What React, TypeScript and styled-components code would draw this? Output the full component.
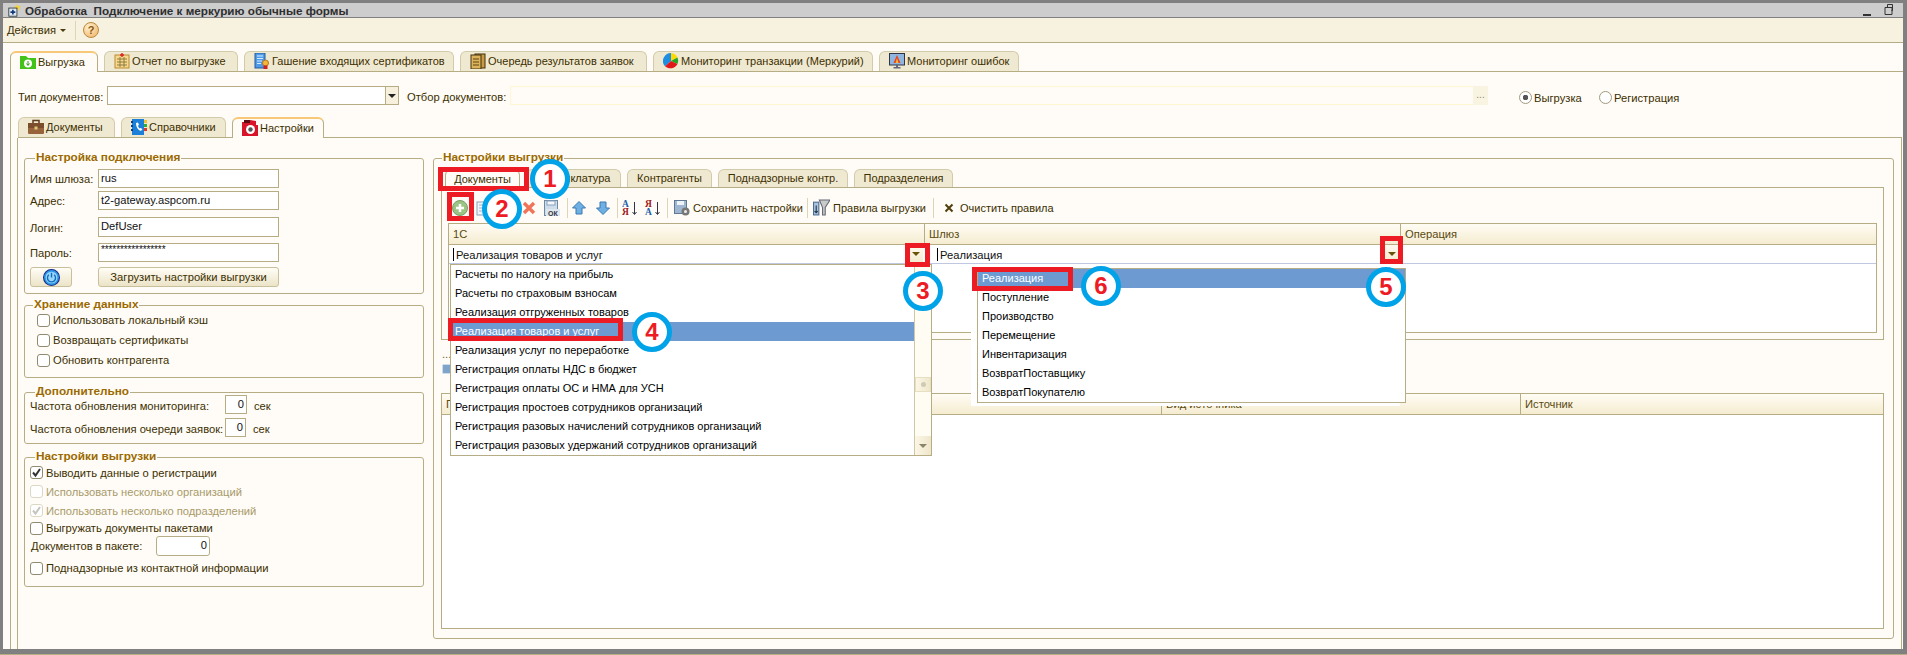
import * as React from "react"
import styled, { createGlobalStyle } from "styled-components"

const LINE = "#b6ad85"
const PAGE = "#fffcf7"
const INK = "#3c2f00"

const GlobalStyle = createGlobalStyle`
    html, body {
        margin: 0;
        padding: 0;
        overflow: hidden;
        background: ${PAGE};
    }
    * {
        box-sizing: border-box;
    }
`

const Window = styled.div`
    position: relative;
    width: 1907px;
    height: 655px;
    display: flex;
    flex-direction: column;
    padding: 3px 4px 5px 3px;
    background: #808080;
    border-bottom: 1px solid ${LINE};
    font-family: "Liberation Sans", Arial, sans-serif;
    font-size: 11.2px;
    color: ${INK};
    white-space: nowrap;
`

const TitleBar = styled.div`
    height: 15px;
    flex: none;
    display: flex;
    align-items: center;
    gap: 4px;
    padding: 0 10px 0 5px;
    background: #cdcdcd;
    border-bottom: 1px solid #808080;
    color: #2e2e2e;
    font-weight: bold;
    font-size: 11.7px;
`

const TitleText = styled.span`
    flex: 1;
    white-space: pre;
`

const MainToolbar = styled.div`
    height: 25px;
    flex: none;
    display: flex;
    align-items: center;
    padding-left: 4px;
    background: #f7f1df;
    border-bottom: 1px solid ${LINE};
`

const MenuArrow = styled.span`
    width: 0;
    height: 0;
    margin: 1px 0 0 4px;
    border-left: 3px solid transparent;
    border-right: 3px solid transparent;
    border-top: 3px solid #4a3c10;
`

const ToolbarDivider = styled.span`
    width: 1px;
    height: 19px;
    margin: 0 7px 0 9px;
    background: #dcd5b6;
`

const HelpIcon = styled.span`
    width: 16px;
    height: 16px;
    display: flex;
    align-items: center;
    justify-content: center;
    border-radius: 50%;
    border: 1px solid #b98a3c;
    background: radial-gradient(circle at 35% 30%, #fff0d0, #f0b060);
    color: #8a5a10;
    font-size: 11px;
    font-weight: bold;
`

const Content = styled.div`
    flex: 1;
    display: flex;
    flex-direction: column;
    min-height: 0;
    padding-top: 8px;
    background: ${PAGE};
`

const TabRow = styled.div<{ $ml?: number; $pl?: number; $mt?: number; $gap?: number }>`
    flex: none;
    display: flex;
    align-items: flex-end;
    gap: ${(p) => p.$gap ?? 6}px;
    margin-left: ${(p) => p.$ml ?? 0}px;
    margin-top: ${(p) => p.$mt ?? 0}px;
    padding-left: ${(p) => p.$pl ?? 0}px;
    border-bottom: 1px solid ${LINE};
`

const Tab = styled.div<{ $width: number; $active?: boolean; $h?: number; $icon?: boolean }>`
    width: ${(p) => p.$width}px;
    height: ${(p) => p.$h ?? 20}px;
    display: flex;
    align-items: center;
    justify-content: ${(p) => (p.$icon ? "flex-start" : "center")};
    gap: 2px;
    padding-left: ${(p) => (p.$icon ? 9 : 0)}px;
    padding-bottom: ${(p) => (p.$icon ? 1 : 2)}px;
    font-size: 11px;
    border: 1px solid ${(p) => (p.$active ? LINE : "#d2cbaa")};
    border-bottom: none;
    border-radius: 6px 6px 0 0;
    background: ${(p) => (p.$active ? PAGE : "#f0e9d2")};
    ${(p) => p.$active && `
        border-top: 2px solid #f7c877;
        margin-bottom: -1px;
        height: ${(p.$h ?? 20) + 1}px;
    `}
`

const OuterPanel = styled.div`
    flex: 1;
    min-height: 0;
    display: flex;
    flex-direction: column;
    margin-left: 7px;
    padding: 0 1px 0 6px;
    border-left: 1px solid ${LINE};
`

const FilterRow = styled.div`
    flex: none;
    display: flex;
    align-items: center;
    height: 19px;
    margin-top: 14px;
    padding-left: 1px;
`

const FilterLabel = styled.span<{ $width: number; $ml?: number }>`
    width: ${(p) => p.$width}px;
    margin-left: ${(p) => p.$ml ?? 0}px;
    padding-top: 3px;
    flex: none;
`

const Combo = styled.div`
    width: 292px;
    height: 19px;
    flex: none;
    display: flex;
    justify-content: flex-end;
    background: #fff;
    border: 1px solid ${LINE};
`

const ComboButton = styled.div`
    width: 13px;
    display: flex;
    align-items: center;
    justify-content: center;
    background: #f6f0dc;
    border-left: 1px solid ${LINE};
`

const DownTriangle = styled.span<{ $color?: string }>`
    width: 0;
    height: 0;
    border-left: 4px solid transparent;
    border-right: 4px solid transparent;
    border-top: 4px solid ${(p) => p.$color ?? "#222"};
`

const PickField = styled.div`
    width: 963px;
    height: 19px;
    flex: none;
    margin-left: 7px;
    border: 1px solid #fff7d2;
    border-right: none;
    background: ${PAGE};
`

const PickButton = styled.div`
    width: 15px;
    height: 19px;
    flex: none;
    text-align: center;
    line-height: 17px;
    font-size: 10px;
    color: #8a8468;
    background: #f9f4e2;
`

const RadioGroup = styled.div`
    display: flex;
    align-items: center;
    margin-left: 31px;
    padding-top: 4px;
`

const RadioMark = styled.span<{ $on?: boolean }>`
    width: 13px;
    height: 13px;
    flex: none;
    margin-right: 2px;
    border-radius: 50%;
    border: 1px solid #a09a80;
    background: ${(p) => (p.$on ? "radial-gradient(circle, #555 0 2.5px, #fff 3px)" : "#fff")};
`

const RadioText = styled.span<{ $width: number }>`
    width: ${(p) => p.$width}px;
    flex: none;
`

const SettingsPanel = styled.div`
    flex: 1;
    min-height: 0;
    display: flex;
    gap: 9px;
    padding: 20px 7px 10px 6px;
    border-left: 1px solid ${LINE};
    border-right: 1px solid ${LINE};
`

const LeftColumn = styled.div`
    width: 400px;
    flex: none;
    display: flex;
    flex-direction: column;
`

const RightColumn = styled.div`
    flex: 1;
    min-width: 0;
    display: flex;
    flex-direction: column;
`

const Group = styled.div<{ $h?: number; $mt?: number; $fill?: boolean }>`
    ${(p) => (p.$h ? `height: ${p.$h}px;` : "")}
    ${(p) => (p.$fill ? "flex: 1; min-height: 0; display: flex; flex-direction: column; padding: 0 9px 9px 7px;" : "padding-left: 5px;")}
    margin-top: ${(p) => p.$mt ?? 0}px;
    border: 1px solid ${LINE};
    border-radius: 3px;
`

const GroupTitle = styled.div<{ $ml: number }>`
    width: fit-content;
    height: 14px;
    margin: -9px 0 1px ${(p) => p.$ml}px;
    padding: 0 1px;
    line-height: 14px;
    background: ${PAGE};
    color: #9b6a00;
    font-weight: bold;
    font-size: 11.8px;
`

const FormRow = styled.div<{ $mt: number }>`
    display: grid;
    grid-template-columns: 68px 181px;
    align-items: center;
    margin-top: ${(p) => p.$mt}px;
`

const FormLabel = styled.span`
    padding-top: 1px;
`

const TextBox = styled.div<{ $h?: number; $align?: string; $w?: number; $round?: boolean }>`
    height: ${(p) => p.$h ?? 19}px;
    ${(p) => (p.$w ? `width: ${p.$w}px;` : "")}
    padding: 0 2px;
    line-height: 16px;
    text-align: ${(p) => p.$align ?? "left"};
    background: #fff;
    color: #111;
    border: 1px solid ${LINE};
    border-radius: ${(p) => (p.$round ? 3 : 0)}px;
`

const Mask = styled.span`
    font-size: 10px;
    letter-spacing: -0.1px;
    line-height: 10px;
    vertical-align: 3px;
`

const GelButton = styled.div`
    height: 20px;
    display: flex;
    align-items: center;
    justify-content: center;
    border: 1px solid #c8c09a;
    border-radius: 3px;
    background: linear-gradient(#fffdf6, #ece4c8);
`

const ButtonCell = styled(GelButton)`
    width: 42px;
`

const CheckList = styled.div<{ $pl: number; $mt: number }>`
    padding-left: ${(p) => p.$pl}px;
    margin-top: ${(p) => p.$mt}px;
`

const CheckRow = styled.div<{ $h: number; $off?: boolean }>`
    height: ${(p) => p.$h}px;
    display: flex;
    align-items: center;
    gap: 2px;
    color: ${(p) => (p.$off ? "#a89a6a" : INK)};
`

const CheckBox = styled.span<{ $off?: boolean }>`
    width: 13px;
    height: 13px;
    flex: none;
    display: flex;
    align-items: center;
    justify-content: center;
    margin-right: 1px;
    background: #fff;
    border: 1px solid ${(p) => (p.$off ? "#ddd8c4" : "#8f8a70")};
    border-radius: 3px;
`

const FreqRow = styled.div<{ $mt: number }>`
    display: flex;
    align-items: center;
    margin-top: ${(p) => p.$mt}px;
`

const FreqLabel = styled.span`
    width: 195px;
    padding-top: 2px;
    flex: none;
`

const Unit = styled.span`
    margin-left: 7px;
    padding-top: 2px;
`

const PackRow = styled.div`
    height: 20px;
    display: flex;
    align-items: center;
`

const PackLabel = styled.span`
    width: 126px;
    padding-left: 1px;
    flex: none;
`

const SubPanel = styled.div`
    height: 152px;
    flex: none;
    display: flex;
    flex-direction: column;
    border: 1px solid ${LINE};
    border-top: none;
`

const ActionBar = styled.div`
    height: 35px;
    flex: none;
    display: flex;
    align-items: center;
    padding: 4px 0 0 6px;
`

const Tool = styled.div<{ $w: number; $ml?: number }>`
    width: ${(p) => p.$w}px;
    margin-left: ${(p) => p.$ml ?? 0}px;
    flex: none;
    display: flex;
    align-items: center;
    justify-content: center;
`

const TextTool = styled.div<{ $w: number; $ml?: number }>`
    width: ${(p) => p.$w}px;
    margin-left: ${(p) => p.$ml ?? 0}px;
    flex: none;
    display: flex;
    align-items: center;
    gap: 3px;
    font-size: 11px;
`

const ClearLabel = styled.span`
    margin-left: 3px;
`

const ToolDivider = styled.span<{ $ml: number }>`
    width: 1px;
    height: 20px;
    flex: none;
    margin-left: ${(p) => p.$ml}px;
    background: #dcd5b6;
`

const Table = styled.div<{ $fill?: boolean }>`
    ${(p) => (p.$fill ? "flex: 1; min-height: 0;" : "height: 110px; flex: none; margin: 0 6px 0 6px;")}
    background: #fff;
    border: 1px solid ${LINE};
`

const HeaderRow = styled.div<{ $cols: string; $h: number }>`
    display: grid;
    grid-template-columns: ${(p) => p.$cols};
    height: ${(p) => p.$h}px;
    background: linear-gradient(#fffcf4, #f5ecd0);
    border-bottom: 1px solid ${LINE};
`

const HeaderCell = styled.div<{ $pl?: number }>`
    display: flex;
    align-items: center;
    padding-left: ${(p) => p.$pl ?? 4}px;
    border-right: 1px solid ${LINE};
    color: #5a4a10;

    &:last-child {
        border-right: none;
    }
`

const EditRow = styled.div`
    display: grid;
    grid-template-columns: 476px 476px 1fr;
    height: 19px;
    border-bottom: 1px solid #bfc8e0;
`

const EditCell = styled.div<{ $pl?: number }>`
    display: flex;
    align-items: center;
    padding: 0 2px 0 ${(p) => p.$pl ?? 4}px;
    color: #111;
`

const Caret = styled.span`
    width: 1px;
    height: 13px;
    margin-right: 2px;
    background: #000;
`

const CellText = styled.span`
    flex: 1;
    padding-top: 1px;
`

const CellButton = styled.div`
    width: 14px;
    height: 18px;
    display: flex;
    align-items: center;
    justify-content: center;
    background: linear-gradient(#fffcf0, #f3e9cc);
`

const MidBar = styled.div`
    height: 53px;
    flex: none;
    display: flex;
    flex-direction: column;
    gap: 4px;
    padding: 8px 0 0 1px;
    color: #6e6330;
`

const DropList = styled.div<{ $left: number; $top: number; $width: number; $halo?: boolean }>`
    position: absolute;
    left: ${(p) => p.$left}px;
    top: ${(p) => p.$top}px;
    width: ${(p) => p.$width}px;
    display: flex;
    background: #fff;
    border: 1px solid ${LINE};
    color: #000;
    font-size: 11px;
    ${(p) => p.$halo && "box-shadow: -6px 0 0 #fff, -6px 3px 0 #fff;"}
`

const DropItems = styled.div`
    flex: 1;
`

const DropItem = styled.div<{ $on?: boolean; $pl: number }>`
    height: 19px;
    line-height: 19px;
    padding-left: ${(p) => p.$pl}px;
    background: ${(p) => (p.$on ? "#6d9bd1" : "transparent")};
    color: ${(p) => (p.$on ? "#fff" : "#000")};
`

const ScrollTrack = styled.div`
    width: 17px;
    flex: none;
    display: flex;
    flex-direction: column;
    background: #fffcf4;
    border-left: 1px solid #cfc8a8;
`

const ScrollGap = styled.div<{ $h: number }>`
    height: ${(p) => p.$h}px;
`

const ScrollThumb = styled.div`
    height: 15px;
    display: flex;
    align-items: center;
    justify-content: center;
    background: linear-gradient(90deg, #fbf6e6, #efe7cb);
    border: 1px solid #e6dfc2;

    &::after {
        content: "";
        width: 5px;
        height: 5px;
        border-radius: 50%;
        background: #cfcab4;
    }
`

const ScrollDown = styled.div`
    height: 19px;
    display: flex;
    align-items: center;
    justify-content: center;
    background: linear-gradient(90deg, #fbf6e6, #efe7cb);
`

const RedMark = styled.div<{ $x: number; $y: number; $x2: number; $y2: number }>`
    position: absolute;
    left: ${(p) => p.$x}px;
    top: ${(p) => p.$y}px;
    width: ${(p) => p.$x2 - p.$x}px;
    height: ${(p) => p.$y2 - p.$y}px;
    border: 5px solid #ed1c24;
`

const StepBadge = styled.div<{ $cx: number; $cy: number }>`
    position: absolute;
    left: ${(p) => p.$cx - 20}px;
    top: ${(p) => p.$cy - 20}px;
    width: 40px;
    height: 40px;
    display: flex;
    align-items: center;
    justify-content: center;
    background: #fff;
    border: 5px solid #00a2e8;
    border-radius: 50%;
    color: #ed1c24;
    font-family: "Liberation Sans", Arial, sans-serif;
    font-size: 24px;
    font-weight: bold;
`

/* icons */
const Svg: React.FC<{ s?: number; children: React.ReactNode }> = ({ s = 16, children }) => (
    <svg width={s} height={s} viewBox="0 0 16 16" style={{ flex: "none" }}>{children}</svg>
)

const AppIcon = () => (
    <Svg s={13}>
        <path d="M12 0l1 2.5 3 .5-2 2 .5 3-2.5-1.5L9 8l.5-3-2-2 3-.5z" fill="#f4d03f" />
        <rect x="1" y="5" width="10" height="10" fill="#dfe8f4" stroke="#233" />
        <path d="M6 7v6M3 10h6" stroke="#123a7a" strokeWidth="2" />
    </Svg>
)
const FolderIcon = () => (
    <Svg>
        <path d="M0 2h6l2 2h8v11H0z" fill="#43c21a" />
        <circle cx="8" cy="9.5" r="4" fill="#fff" />
        <path d="M8 7v4M6.5 9.5L8 11.5l1.5-2" stroke="#2f9a12" fill="none" />
    </Svg>
)
const ReportIcon = () => (
    <Svg>
        <rect x="1" y="2" width="14" height="13" fill="#f6d98c" stroke="#b98a30" />
        <path d="M3 6h10M3 9h10M3 12h10M6 4v10M10 4v10" stroke="#8f7a40" />
        <path d="M8 0v4M6 2h4" stroke="#d22" strokeWidth="1.4" />
    </Svg>
)
const CertIcon = () => (
    <Svg>
        <rect x="1" y="0" width="10" height="15" fill="#4f9be8" stroke="#235a9e" />
        <path d="M3 3h6M3 5.500h6M3 8h5M3 10.500h4" stroke="#d8ecff" />
        <circle cx="11.500" cy="10" r="3" fill="#f4b73a" stroke="#b9761a" />
        <path d="M9.500 12.500v3.500h4v-3.500" fill="#c22" />
    </Svg>
)
const QueueIcon = () => (
    <Svg>
        <rect x="5" y="1" width="10" height="14" fill="#c99a45" stroke="#40300c" />
        <rect x="1" y="2" width="10" height="14" fill="#dcb35c" stroke="#40300c" />
        <path d="M3 6h6M3 9h6M3 12h6" stroke="#5b4512" />
    </Svg>
)
const PieIcon = () => (
    <Svg>
        <path d="M8 8V0a8 8 0 0 0-6 13.300z" fill="#1f8de0" />
        <path d="M8 8V0a8 8 0 0 1 6.500 4.500z" fill="#ffd900" />
        <path d="M8 8l6.500-3.500a8 8 0 0 1 0 6.500z" fill="#22a52a" />
        <path d="M8 8l6.500 3A8 8 0 0 1 2 13.300z" fill="#e01818" />
    </Svg>
)
const MonitorIcon = () => (
    <Svg>
        <rect x="0.500" y="0.500" width="15" height="11.500" fill="#8fb6e0" stroke="#334" />
        <path d="M8 2l3.500 8h-7z" fill="#e8401a" />
        <path d="M8 5l1.500 5h-3z" fill="#f6b73a" />
        <path d="M7 12h2v2h2.500v1.500h-7V14H7z" fill="#667" />
    </Svg>
)
const CaseIcon = () => (
    <Svg>
        <rect x="0" y="4" width="16" height="11" rx="1" fill="#96633a" />
        <rect x="0" y="4" width="16" height="5" fill="#7c4d2a" />
        <path d="M5 4V1.500h6V4" fill="none" stroke="#5e3a1e" strokeWidth="1.500" />
        <rect x="6.500" y="7.500" width="3" height="3" fill="#e2c680" />
    </Svg>
)
const BookIcon = () => (
    <Svg>
        <rect x="1" y="0" width="12" height="16" fill="#1c7fd8" />
        <path d="M0 2h2v2H0zM0 6h2v2H0zM0 10h2v2H0z" fill="#0d3f80" />
        <path d="M13 1h3v3h-3z" fill="#f4c430" />
        <path d="M13 5h3v3h-3z" fill="#2fae3a" />
        <path d="M13 9h3v3h-3z" fill="#e23a2a" />
        <path d="M5 4c0 4 2 7 5 8l1.500-2-2-1-1 .5C7.500 8.500 7 7.500 7 6.500L8 6 7 3.500z" fill="#fff" />
    </Svg>
)
const SetupIcon = () => (
    <Svg>
        <path d="M0 2h6l2-2 6 1v4h2v11H0z" fill="#d8142a" />
        <rect x="2" y="0" width="6" height="3" fill="#5a0a12" />
        <circle cx="8.500" cy="9.500" r="4.500" fill="#fff" />
        <circle cx="8.500" cy="9.500" r="2.200" fill="#555" />
    </Svg>
)
const PowerIcon = () => (
    <Svg s={17}>
        <circle cx="8" cy="8" r="7.500" fill="#2f9be8" stroke="#1a2a8a" />
        <circle cx="8" cy="8" r="5.500" fill="#9ad6f8" />
        <path d="M5.500 5.500a3.800 3.800 0 1 0 5 0M8 3.500v4.500" fill="none" stroke="#0f6cc0" strokeWidth="1.300" />
    </Svg>
)
const Tick = ({ off }: { off?: boolean }) => (
    <svg width="11" height="11" viewBox="0 0 11 11">
        <path d="M2 5.500l2.500 3L9 2" fill="none" stroke={off ? "#c4c4c0" : "#333"} strokeWidth="2" />
    </svg>
)
const AddIcon = () => (
    <Svg>
        <circle cx="8" cy="8" r="7.500" fill="#9cc484" stroke="#7a9e68" />
        <path d="M8 4v8M4 8h8" stroke="#fff" strokeWidth="2.500" />
    </Svg>
)
const DocIcon = () => (
    <Svg>
        <rect x="1" y="2" width="10" height="13" fill="#f2f6fb" stroke="#8aa0bc" />
        <path d="M3 5h6M3 8h6M3 11h6" stroke="#9db4d0" />
    </Svg>
)
const CrossIcon = () => (
    <Svg>
        <path d="M3 3l10 10M13 3L3 13" stroke="#f0745a" strokeWidth="3.400" />
    </Svg>
)
const SaveOkIcon = () => (
    <Svg>
        <rect x="0.500" y="0.500" width="13" height="15" fill="#cfdcea" stroke="#6f88a4" />
        <rect x="3" y="1" width="8" height="4" fill="#f4f8fc" stroke="#8aa0bc" />
        <rect x="2" y="9" width="14" height="7" fill="#dfe7ef" />
        <text x="4" y="15.500" fontSize="7" fontWeight="bold" fill="#334" fontFamily="Liberation Sans">ОК</text>
    </Svg>
)
const ArrowIcon = ({ down }: { down?: boolean }) => (
    <Svg>
        <path
            d={down ? "M5 2h6v6h3.500L8 14.500 1.500 8H5z" : "M5 14h6V8h3.500L8 1.500 1.500 8H5z"}
            fill="#6fb0e4"
            stroke="#3a78b0"
        />
    </Svg>
)
const SortIcon = ({ first, second, a, b }: { first: string; second: string; a: string; b: string }) => (
    <svg width="17" height="17" viewBox="0 0 17 17" style={{ flex: "none" }}>
        <text x="0" y="8" fontSize="9.500" fontWeight="bold" fill={a} fontFamily="Liberation Serif">{first}</text>
        <text x="0" y="16" fontSize="9.500" fontWeight="bold" fill={b} fontFamily="Liberation Serif">{second}</text>
        <path d="M12.500 3v12M10.500 13l2 2.500 2-2.500" fill="none" stroke="#334" />
    </svg>
)
const SaveGearIcon = () => (
    <Svg>
        <rect x="0.500" y="0.500" width="12" height="13" fill="#9fb6d0" stroke="#5f7894" />
        <rect x="3" y="1" width="7" height="4" fill="#eef3f8" />
        <circle cx="11.500" cy="11.500" r="4" fill="#777" />
        <circle cx="11.500" cy="11.500" r="1.500" fill="#eee" />
    </Svg>
)
const FunnelIcon = () => (
    <Svg s={17}>
        <path d="M6 1h10L11.500 8v7H9V8z" fill="#c8ccc8" stroke="#667" />
        <rect x="0.500" y="3" width="5" height="12" fill="#a9c4e0" stroke="#4c6c90" />
        <path d="M3 6v7M1.500 11.500L3 13l1.500-1.500" fill="none" stroke="#234" />
    </Svg>
)
const ClearIcon = () => (
    <svg width="10" height="10" viewBox="0 0 10 10" style={{ flex: "none" }}>
        <path d="M1.500 1.500l7 7M8.500 1.500l-7 7" stroke="#4f3f0c" strokeWidth="2" />
    </svg>
)
const MiniSave = () => (
    <Svg s={10}>
        <rect x="1" y="1" width="14" height="14" fill="#7fa4cc" />
    </Svg>
)

const firstList = [
    "Расчеты по налогу на прибыль",
    "Расчеты по страховым взносам",
    "Реализация отгруженных товаров",
    "Реализация товаров и услуг",
    "Реализация услуг по переработке",
    "Регистрация оплаты НДС в бюджет",
    "Регистрация оплаты ОС и НМА для УСН",
    "Регистрация простоев сотрудников организаций",
    "Регистрация разовых начислений сотрудников организаций",
    "Регистрация разовых удержаний сотрудников организаций",
]

const secondList = [
    "Реализация",
    "Поступление",
    "Производство",
    "Перемещение",
    "Инвентаризация",
    "ВозвратПоставщику",
    "ВозвратПокупателю",
]

export default function App() {
    return (
        <Window>
            <GlobalStyle />
            <TitleBar>
                <AppIcon />
                <TitleText>Обработка  Подключение к меркурию обычные формы</TitleText>
                <svg width="30" height="12" viewBox="0 0 30 12">
                    <path d="M0 10h8v2H0z" fill="#333" />
                    <path d="M22 3.500h7v7h-7zM24.500 3.500V.5h5v6h-1" fill="none" stroke="#333" />
                </svg>
            </TitleBar>
            <MainToolbar>
                <span>Действия</span>
                <MenuArrow />
                <ToolbarDivider />
                <HelpIcon>?</HelpIcon>
            </MainToolbar>
            <Content>
                <TabRow $ml={7}>
                    <Tab $width={88} $icon $active><FolderIcon />Выгрузка</Tab>
                    <Tab $width={134} $icon><ReportIcon />Отчет по выгрузке</Tab>
                    <Tab $width={210} $icon><CertIcon />Гашение входящих сертификатов</Tab>
                    <Tab $width={187} $icon><QueueIcon />Очередь результатов заявок</Tab>
                    <Tab $width={220} $icon><PieIcon />Мониторинг транзакции (Меркурий)</Tab>
                    <Tab $width={140} $icon><MonitorIcon />Мониторинг ошибок</Tab>
                </TabRow>
                <OuterPanel>
                    <FilterRow>
                        <FilterLabel $width={89}>Тип документов:</FilterLabel>
                        <Combo>
                            <ComboButton><DownTriangle /></ComboButton>
                        </Combo>
                        <FilterLabel $width={96} $ml={8}>Отбор документов:</FilterLabel>
                        <PickField />
                        <PickButton>...</PickButton>
                        <RadioGroup>
                            <RadioMark $on />
                            <RadioText $width={65}>Выгрузка</RadioText>
                            <RadioMark />
                            <RadioText $width={70}>Регистрация</RadioText>
                        </RadioGroup>
                    </FilterRow>
                    <TabRow $ml={1} $mt={12}>
                        <Tab $width={97} $icon><CaseIcon />Документы</Tab>
                        <Tab $width={105} $icon><BookIcon />Справочники</Tab>
                        <Tab $width={92} $icon $active><SetupIcon />Настройки</Tab>
                    </TabRow>
                    <SettingsPanel>
                        <LeftColumn>
                            <Group $h={136}>
                                <GroupTitle $ml={5}>Настройка подключения</GroupTitle>
                                <FormRow $mt={5}><FormLabel>Имя шлюза:</FormLabel><TextBox>rus</TextBox></FormRow>
                                <FormRow $mt={3}><FormLabel>Адрес:</FormLabel><TextBox>t2-gateway.aspcom.ru</TextBox></FormRow>
                                <FormRow $mt={7}><FormLabel>Логин:</FormLabel><TextBox $h={20}>DefUser</TextBox></FormRow>
                                <FormRow $mt={6}><FormLabel>Пароль:</FormLabel><TextBox><Mask>*****************</Mask></TextBox></FormRow>
                                <FormRow $mt={5}>
                                    <ButtonCell><PowerIcon /></ButtonCell>
                                    <GelButton>Загрузить настройки выгрузки</GelButton>
                                </FormRow>
                            </Group>
                            <Group $h={73} $mt={11}>
                                <GroupTitle $ml={3}>Хранение данных</GroupTitle>
                                <CheckList $pl={7} $mt={-2}>
                                    <CheckRow $h={20}><CheckBox />Использовать локальный кэш</CheckRow>
                                    <CheckRow $h={20}><CheckBox />Возвращать сертификаты</CheckRow>
                                    <CheckRow $h={20}><CheckBox />Обновить контрагента</CheckRow>
                                </CheckList>
                            </Group>
                            <Group $h={52} $mt={14}>
                                <GroupTitle $ml={5}>Дополнительно</GroupTitle>
                                <FreqRow $mt={-4}>
                                    <FreqLabel>Частота обновления мониторинга:</FreqLabel>
                                    <TextBox $w={22} $align="right">0</TextBox>
                                    <Unit>сек</Unit>
                                </FreqRow>
                                <FreqRow $mt={4}>
                                    <FreqLabel>Частота обновления очереди заявок:</FreqLabel>
                                    <TextBox $w={21} $align="right">0</TextBox>
                                    <Unit>сек</Unit>
                                </FreqRow>
                            </Group>
                            <Group $h={130} $mt={13}>
                                <GroupTitle $ml={5}>Настройки выгрузки</GroupTitle>
                                <CheckList $pl={0} $mt={-1}>
                                    <CheckRow $h={19}><CheckBox><Tick /></CheckBox>Выводить данные о регистрации</CheckRow>
                                    <CheckRow $h={19} $off><CheckBox $off />Использовать несколько организаций</CheckRow>
                                    <CheckRow $h={19} $off><CheckBox $off><Tick off /></CheckBox>Использовать несколько подразделений</CheckRow>
                                    <CheckRow $h={16}><CheckBox />Выгружать документы пакетами</CheckRow>
                                    <PackRow>
                                        <PackLabel>Документов в пакете:</PackLabel>
                                        <TextBox $h={20} $w={54} $align="right" $round>0</TextBox>
                                    </PackRow>
                                    <CheckRow $h={24}><CheckBox />Поднадзорные из контактной информации</CheckRow>
                                </CheckList>
                            </Group>
                        </LeftColumn>
                        <RightColumn>
                            <Group $fill>
                                <GroupTitle $ml={1}>Настройки выгрузки</GroupTitle>
                                <TabRow $pl={4} $mt={4}>
                                    <Tab $width={75} $h={18} $active>Документы</Tab>
                                    <Tab $width={95} $h={18}>Номенклатура</Tab>
                                    <Tab $width={85} $h={18}>Контрагенты</Tab>
                                    <Tab $width={130} $h={18}>Поднадзорные контр.</Tab>
                                    <Tab $width={99} $h={18}>Подразделения</Tab>
                                </TabRow>
                                <SubPanel>
                                    <ActionBar>
                                        <Tool $w={24}><AddIcon /></Tool>
                                        <Tool $w={24}><DocIcon /></Tool>
                                        <Tool $w={22} $ml={22}><CrossIcon /></Tool>
                                        <Tool $w={24}><SaveOkIcon /></Tool>
                                        <ToolDivider $ml={3} />
                                        <Tool $w={16} $ml={3}><ArrowIcon /></Tool>
                                        <Tool $w={16} $ml={8}><ArrowIcon down /></Tool>
                                        <ToolDivider $ml={6} />
                                        <Tool $w={18} $ml={3}><SortIcon first="А" second="Я" a="#1c5fa8" b="#a01818" /></Tool>
                                        <Tool $w={18} $ml={5}><SortIcon first="Я" second="А" a="#a01818" b="#1c5fa8" /></Tool>
                                        <ToolDivider $ml={5} />
                                        <TextTool $w={133} $ml={6}><SaveGearIcon />Сохранить настройки</TextTool>
                                        <ToolDivider $ml={0} />
                                        <TextTool $w={120} $ml={5}><FunnelIcon />Правила выгрузки</TextTool>
                                        <ToolDivider $ml={0} />
                                        <TextTool $w={110} $ml={10}><ClearIcon /><ClearLabel>Очистить правила</ClearLabel></TextTool>
                                    </ActionBar>
                                    <Table>
                                        <HeaderRow $cols="476px 476px 1fr" $h={21}>
                                            <HeaderCell>1С</HeaderCell>
                                            <HeaderCell>Шлюз</HeaderCell>
                                            <HeaderCell>Операция</HeaderCell>
                                        </HeaderRow>
                                        <EditRow>
                                            <EditCell>
                                                <Caret />
                                                <CellText>Реализация товаров и услуг</CellText>
                                                <CellButton><DownTriangle $color="#6a5208" /></CellButton>
                                            </EditCell>
                                            <EditCell $pl={12}>
                                                <Caret />
                                                <CellText>Реализация</CellText>
                                                <CellButton><DownTriangle $color="#6a5208" /></CellButton>
                                            </EditCell>
                                            <EditCell />
                                        </EditRow>
                                    </Table>
                                </SubPanel>
                                <MidBar>
                                    <span>...</span>
                                    <MiniSave />
                                </MidBar>
                                <Table $fill>
                                    <HeaderRow $cols="720px 359px 1fr" $h={21}>
                                        <HeaderCell>П</HeaderCell>
                                        <HeaderCell>Вид источника</HeaderCell>
                                        <HeaderCell>Источник</HeaderCell>
                                    </HeaderRow>
                                </Table>
                            </Group>
                        </RightColumn>
                    </SettingsPanel>
                </OuterPanel>
            </Content>

            <DropList $left={450} $top={264} $width={482}>
                <DropItems>
                    {firstList.map((name, i) => (
                        <DropItem key={name} $pl={4} $on={i === 3}>{name}</DropItem>
                    ))}
                </DropItems>
                <ScrollTrack>
                    <ScrollGap $h={112} />
                    <ScrollThumb />
                    <ScrollGap $h={44} />
                    <ScrollDown><DownTriangle $color="#8a8468" /></ScrollDown>
                </ScrollTrack>
            </DropList>
            <DropList $left={977} $top={268} $width={429} $halo>
                <DropItems>
                    {secondList.map((name, i) => (
                        <DropItem key={name} $pl={4} $on={i === 0}>{name}</DropItem>
                    ))}
                </DropItems>
            </DropList>

            <RedMark $x={438} $y={167} $x2={529} $y2={191} />
            <RedMark $x={447} $y={192} $x2={474} $y2={221} />
            <RedMark $x={905} $y={243} $x2={930} $y2={267} />
            <RedMark $x={448} $y={318} $x2={623} $y2={341} />
            <RedMark $x={1380} $y={236} $x2={1403} $y2={264} />
            <RedMark $x={972} $y={267} $x2={1073} $y2={291} />

            <StepBadge $cx={550} $cy={179}>1</StepBadge>
            <StepBadge $cx={502} $cy={209}>2</StepBadge>
            <StepBadge $cx={923} $cy={291}>3</StepBadge>
            <StepBadge $cx={652} $cy={332}>4</StepBadge>
            <StepBadge $cx={1386} $cy={287}>5</StepBadge>
            <StepBadge $cx={1101} $cy={286}>6</StepBadge>
        </Window>
    )
}
